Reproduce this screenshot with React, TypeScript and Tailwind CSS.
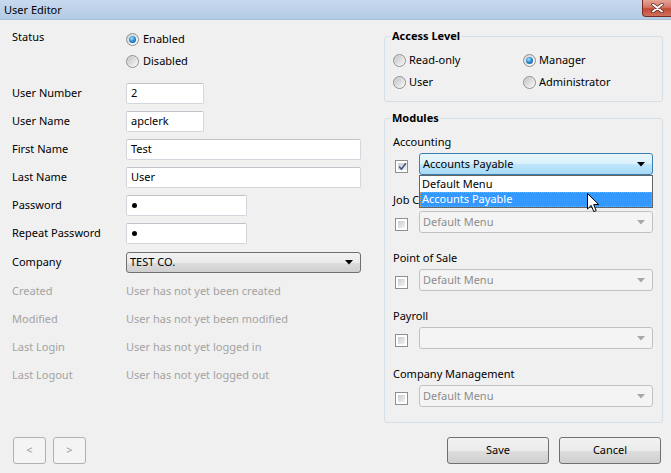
import React from "react";

function Radio({ checked }: { checked?: boolean }) {
  return (
    <span className="w-[13px] h-[13px] shrink-0 rounded-full border border-[#8e8f8f] bg-[linear-gradient(135deg,#cfcfcf,#ffffff)] flex items-center justify-center">
      {checked ? (
        <span className="w-[7px] h-[7px] rounded-full bg-[radial-gradient(circle_at_40%_35%,#a8e4ff_0%,#2c8fd8_45%,#0a4a88_100%)]" />
      ) : (
        <span className="w-[9px] h-[9px] rounded-full bg-[linear-gradient(135deg,#c4c4c4,#f6f6f6)]" />
      )}
    </span>
  );
}

function Checkbox({ checked }: { checked?: boolean }) {
  return (
    <span className="w-[13px] h-[13px] shrink-0 border border-[#8f8f8f] bg-white p-[2px] flex">
      <span className="flex-1 bg-[linear-gradient(135deg,#cbcbcb,#f3f3f3)] flex items-center justify-center">
        {checked && (
          <svg width="9" height="9" viewBox="0 0 9 9">
            <path d="M1.2 4.6 L3.4 7.2 L7.8 1.2" fill="none" stroke="#41568a" strokeWidth="1.6" />
          </svg>
        )}
      </span>
    </span>
  );
}

function Arrow({ color }: { color: string }) {
  return (
    <svg width="8" height="5" viewBox="0 0 8 5" className="shrink-0">
      <polygon points="0,0 8,0 4,4.5" fill={color} />
    </svg>
  );
}

function TextInput({ w, value }: { w: string; value: React.ReactNode }) {
  return (
    <div className={`${w} h-[21px] bg-white border border-[#d3d7dd] border-t-[#c0c4ca] rounded-[2px] flex items-center pl-[4px] text-black`}>
      {value}
    </div>
  );
}

function Dot() {
  return <span className="w-[5px] h-[5px] rounded-full bg-black ml-[1px]" />;
}

function DisabledSelect({ value }: { value: string }) {
  return (
    <div className="w-[234px] h-[22px] rounded-[3px] border border-[#c2c2c2] bg-[#f4f4f4] flex items-center justify-between pl-[3px] pr-[7px] text-[#8c8c8c]">
      <span>{value}</span>
      <Arrow color="#a8a8a8" />
    </div>
  );
}

function LeftRow({ label, children, cls }: { label: string; children: React.ReactNode; cls?: string }) {
  return (
    <div className={`flex items-center h-[21px] ${cls ?? "mt-[7px]"}`}>
      <span className="w-[114px] shrink-0">{label}</span>
      {children}
    </div>
  );
}

function InfoRow({ label, text }: { label: string; text: string }) {
  return (
    <div className="flex items-center h-[28px] text-[#a3a3a3]">
      <span className="w-[114px] shrink-0">{label}</span>
      <span>{text}</span>
    </div>
  );
}

function Module({
  label,
  children,
  cls,
  checked,
}: {
  label: string;
  children: React.ReactNode;
  cls: string;
  checked?: boolean;
}) {
  return (
    <div className={cls}>
      <div className="h-[18px] flex items-center">{label}</div>
      <div className="flex items-start mt-[2px]">
        <span className="ml-[2px] mt-[7px]">
          <Checkbox checked={checked} />
        </span>
        <span className="ml-[11px]">{children}</span>
      </div>
    </div>
  );
}

export default function App() {
  return (
    <div className="w-[671px] h-[473px] bg-[#f0f0f0] flex flex-col overflow-hidden font-['Noto_Sans',sans-serif] text-[11px] text-black select-none">
      {/* Title bar */}
      <div className="h-[20px] shrink-0 flex items-start justify-between bg-[linear-gradient(#c6d9ee,#b3cbe6)] border-b border-[#a9bfd8]">
        <span className="pl-[4px] leading-[19px] text-[11px]">User Editor</span>
        <div className="w-[29px] h-[17px] rounded-bl-[4px] border border-t-0 border-r-0 border-[#7b2c22] bg-[linear-gradient(#e4a594_0%,#d4776a_45%,#c04a35_55%,#d0705c_100%)] flex items-center justify-center">
          <svg width="13" height="10" viewBox="0 0 13 10">
            <path d="M2 1.5 L11 8.5 M11 1.5 L2 8.5" stroke="#5a2018" strokeWidth="3.4" strokeLinecap="round" />
            <path d="M2 1.5 L11 8.5 M11 1.5 L2 8.5" stroke="#ffffff" strokeWidth="2" strokeLinecap="round" />
          </svg>
        </div>
      </div>

      {/* Body */}
      <div className="flex-1 flex flex-col">
        <div className="flex">
          {/* Left column */}
          <div className="w-[372px] ml-[12px] pt-[8px] flex flex-col">
            <div className="flex">
              <span className="w-[114px] shrink-0 leading-[18px]">Status</span>
              <div className="flex flex-col">
                <div className="h-[22px] flex items-center gap-[4px]">
                  <Radio checked />
                  <span>Enabled</span>
                </div>
                <div className="h-[22px] flex items-center gap-[4px]">
                  <Radio />
                  <span>Disabled</span>
                </div>
              </div>
            </div>

            <LeftRow label="User Number" cls="mt-[11px]">
              <TextInput w="w-[78px]" value="2" />
            </LeftRow>
            <LeftRow label="User Name">
              <TextInput w="w-[78px]" value="apclerk" />
            </LeftRow>
            <LeftRow label="First Name">
              <TextInput w="w-[235px]" value="Test" />
            </LeftRow>
            <LeftRow label="Last Name">
              <TextInput w="w-[235px]" value="User" />
            </LeftRow>
            <LeftRow label="Password">
              <TextInput w="w-[121px]" value={<Dot />} />
            </LeftRow>
            <LeftRow label="Repeat Password">
              <TextInput w="w-[121px]" value={<Dot />} />
            </LeftRow>
            <LeftRow label="Company" cls="mt-[8px]">
              <div className="w-[235px] h-[21px] rounded-[3px] border border-[#707070] bg-[linear-gradient(#f2f2f2_0%,#ebebeb_50%,#dddddd_51%,#cfcfcf_100%)] flex items-center justify-between pl-[3px] pr-[7px]">
                <span>TEST CO.</span>
                <Arrow color="#000" />
              </div>
            </LeftRow>

            <div className="mt-[4px] flex flex-col">
              <InfoRow label="Created" text="User has not yet been created" />
              <InfoRow label="Modified" text="User has not yet been modified" />
              <InfoRow label="Last Login" text="User has not yet logged in" />
              <InfoRow label="Last Logout" text="User has not yet logged out" />
            </div>
          </div>

          {/* Right column */}
          <div className="w-[279px] pt-[8px] flex flex-col">
            <fieldset className="border border-[#d5dfe5] rounded-[3px] px-[8px] pb-[8px]">
              <legend className="ml-[-2px] px-[1px] font-bold leading-[16px]">Access Level</legend>
              <div className="grid grid-cols-[130px_1fr] mt-[5px]">
                <div className="h-[22px] flex items-center gap-[3px]">
                  <Radio />
                  <span>Read-only</span>
                </div>
                <div className="h-[22px] flex items-center gap-[3px]">
                  <Radio checked />
                  <span>Manager</span>
                </div>
                <div className="h-[22px] flex items-center gap-[3px]">
                  <Radio />
                  <span>User</span>
                </div>
                <div className="h-[22px] flex items-center gap-[3px]">
                  <Radio />
                  <span>Administrator</span>
                </div>
              </div>
            </fieldset>

            <fieldset className="mt-[8px] border border-[#d5dfe5] rounded-[3px] px-[8px] pb-[15px]">
              <legend className="ml-[-2px] px-[1px] font-bold leading-[16px]">Modules</legend>

              <Module label="Accounting" cls="mt-[7px]" checked>
                <div className="relative z-10">
                  <div className="w-[234px] h-[22px] rounded-[3px] border border-[#3c7fb1] bg-[linear-gradient(#eaf6fd_0%,#d9f0fc_50%,#bee6fd_51%,#a7d9f5_100%)] flex items-center justify-between pl-[3px] pr-[7px]">
                    <span>Accounts Payable</span>
                    <Arrow color="#000" />
                  </div>
                  <div className="absolute left-0 top-full w-[234px] bg-white border border-[#646464] flex flex-col">
                    <div className="h-[16px] flex items-center pl-[2px]">Default Menu</div>
                    <div className="h-[15px] flex items-center pl-[1px] bg-[#3399ff] text-white border border-dotted border-[#e89a3c]">
                      Accounts Payable
                    </div>
                    <svg
                      width="13"
                      height="20"
                      viewBox="0 0 13 20"
                      className="absolute left-[167px] top-[17px]"
                    >
                      <path
                        d="M0.5 0.5 L0.5 16 L4.2 12.4 L6.8 18.6 L9.2 17.6 L6.7 11.6 L11.8 11.6 Z"
                        fill="#ffffff"
                        stroke="#000000"
                        strokeWidth="1"
                        strokeLinejoin="round"
                      />
                    </svg>
                  </div>
                </div>
              </Module>

              <Module label="Job Costing" cls="mt-[16px]">
                <DisabledSelect value="Default Menu" />
              </Module>
              <Module label="Point of Sale" cls="mt-[16px]">
                <DisabledSelect value="Default Menu" />
              </Module>
              <Module label="Payroll" cls="mt-[16px]">
                <DisabledSelect value="" />
              </Module>
              <Module label="Company Management" cls="mt-[16px]">
                <DisabledSelect value="Default Menu" />
              </Module>
            </fieldset>
          </div>
        </div>

        {/* Bottom buttons */}
        <div className="mt-auto mb-[9px] h-[27px] flex items-center justify-between pl-[13px] pr-[10px]">
          <div className="flex gap-[7px]">
            <div className="w-[33px] h-[27px] rounded-[3px] border border-[#adb2b5] bg-[#f4f4f4] flex items-center justify-center text-[#9a9a9a]">
              &lt;
            </div>
            <div className="w-[33px] h-[27px] rounded-[3px] border border-[#adb2b5] bg-[#f4f4f4] flex items-center justify-center text-[#9a9a9a]">
              &gt;
            </div>
          </div>
          <div className="flex gap-[10px]">
            <div className="w-[102px] h-[27px] rounded-[3px] border border-[#707070] bg-[linear-gradient(#f2f2f2_0%,#ebebeb_50%,#dddddd_51%,#cfcfcf_100%)] flex items-center justify-center">
              Save
            </div>
            <div className="w-[102px] h-[27px] rounded-[3px] border border-[#707070] bg-[linear-gradient(#f2f2f2_0%,#ebebeb_50%,#dddddd_51%,#cfcfcf_100%)] flex items-center justify-center">
              Cancel
            </div>
          </div>
        </div>
      </div>
    </div>
  );
}
